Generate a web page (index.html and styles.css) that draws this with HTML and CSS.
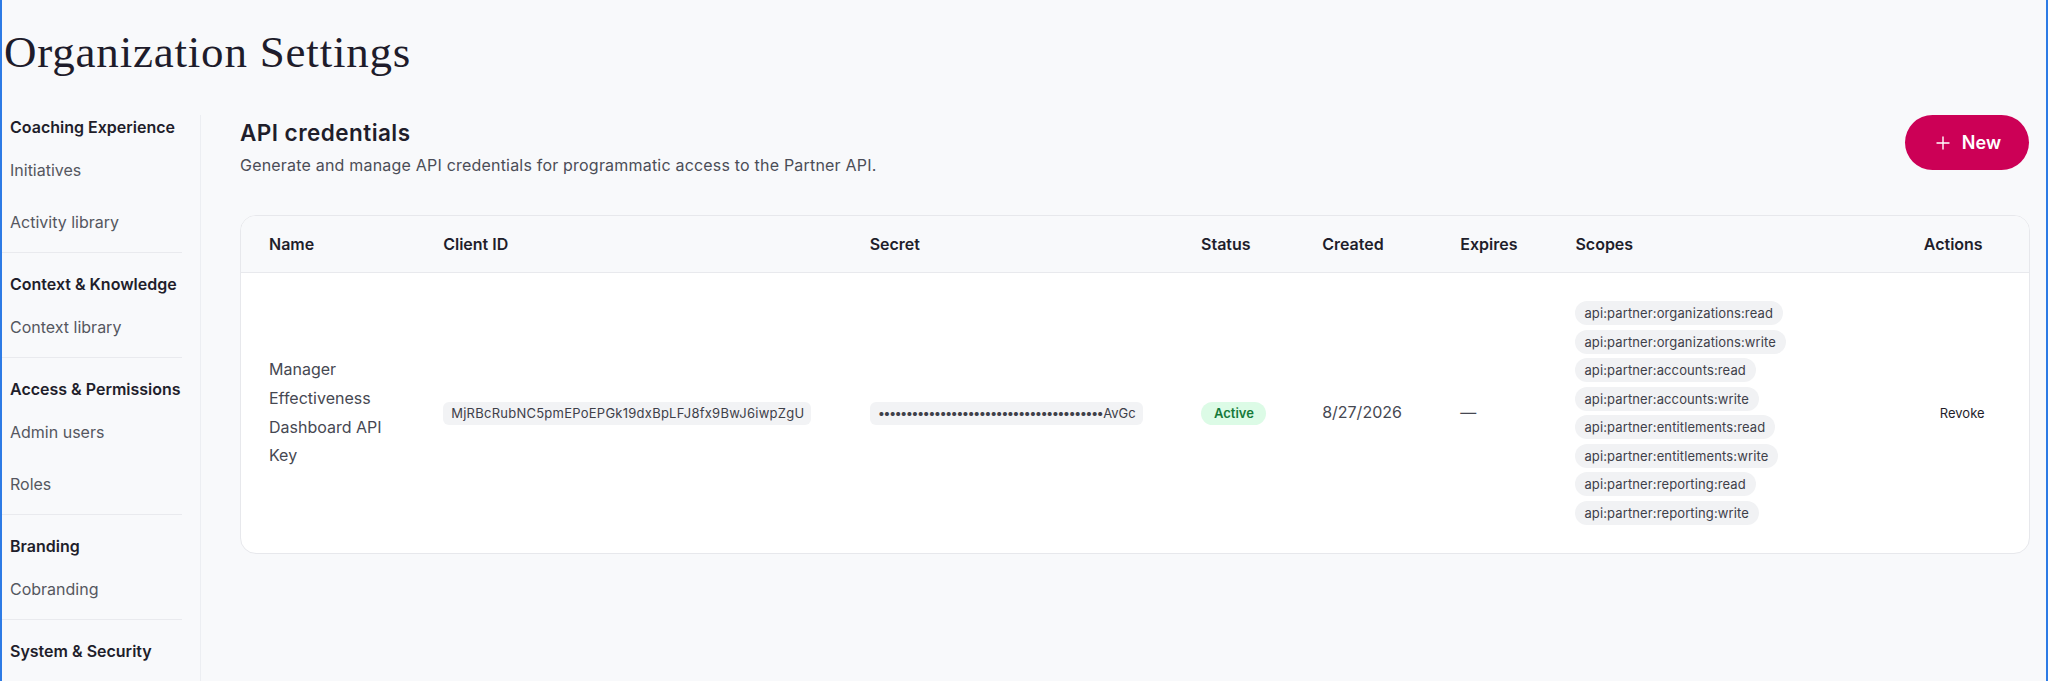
FILE: index.html
```html
<!DOCTYPE html>
<html lang="en">
<head>
<meta charset="utf-8">
<title>Organization Settings</title>
<link rel="stylesheet" href="styles.css">
</head>
<body>
<div class="frame">
  <h1 class="page-title">Organization Settings</h1>
  <div class="layout">
    <nav class="sidebar">
      <div class="nav-group">
        <div class="nav-heading">Coaching Experience</div>
        <a class="nav-item">Initiatives</a>
        <a class="nav-item">Activity library</a>
      </div>
      <div class="nav-group">
        <div class="nav-heading">Context &amp; Knowledge</div>
        <a class="nav-item">Context library</a>
      </div>
      <div class="nav-group">
        <div class="nav-heading">Access &amp; Permissions</div>
        <a class="nav-item">Admin users</a>
        <a class="nav-item">Roles</a>
      </div>
      <div class="nav-group">
        <div class="nav-heading">Branding</div>
        <a class="nav-item">Cobranding</a>
      </div>
      <div class="nav-group nav-group-last">
        <div class="nav-heading">System &amp; Security</div>
      </div>
    </nav>

    <main class="main">
      <header class="section-head">
        <div class="section-text">
          <h2 class="section-title">API credentials</h2>
          <p class="section-desc">Generate and manage API credentials for programmatic access to the Partner API.</p>
        </div>
        <button class="btn-new" type="button">
          <svg class="btn-icon" viewBox="0 0 14 14" width="14" height="14" aria-hidden="true">
            <path d="M7 1v12M1 7h12" stroke="currentColor" stroke-width="1.4" stroke-linecap="round" fill="none"/>
          </svg>
          <span>New</span>
        </button>
      </header>

      <div class="card">
        <table class="cred-table">
          <colgroup>
            <col class="c-name">
            <col class="c-client">
            <col class="c-secret">
            <col class="c-status">
            <col class="c-created">
            <col class="c-expires">
            <col class="c-scopes">
            <col class="c-actions">
          </colgroup>
          <thead>
            <tr>
              <th>Name</th>
              <th>Client ID</th>
              <th>Secret</th>
              <th>Status</th>
              <th>Created</th>
              <th>Expires</th>
              <th>Scopes</th>
              <th>Actions</th>
            </tr>
          </thead>
          <tbody>
            <tr>
              <td class="cell-name">Manager Effectiveness Dashboard API Key</td>
              <td><code class="chip-code chip-id">MjRBcRubNC5pmEPoEPGk19dxBpLFJ8fx9BwJ6iwpZgU</code></td>
              <td><code class="chip-code"><span class="mask">••••••••••••••••••••••••••••••••••••••••</span>AvGc</code></td>
              <td><span class="badge-active">Active</span></td>
              <td>8/27/2026</td>
              <td>—</td>
              <td>
                <div class="scope-list">
                  <span class="scope">api:partner:organizations:read</span>
                  <span class="scope">api:partner:organizations:write</span>
                  <span class="scope">api:partner:accounts:read</span>
                  <span class="scope">api:partner:accounts:write</span>
                  <span class="scope">api:partner:entitlements:read</span>
                  <span class="scope">api:partner:entitlements:write</span>
                  <span class="scope">api:partner:reporting:read</span>
                  <span class="scope">api:partner:reporting:write</span>
                </div>
              </td>
              <td><button class="btn-revoke" type="button">Revoke</button></td>
            </tr>
          </tbody>
        </table>
      </div>
    </main>
  </div>
</div>
</body>
</html>
```

FILE: styles.css
```css
* {
  box-sizing: border-box;
}

html,
body {
  margin: 0;
  padding: 0;
  height: 100%;
}

body {
  background: #f8f9fb;
  font-family: "Inter", "Liberation Sans", sans-serif;
  color: #1f2230;
}

.frame {
  min-height: 100%;
  border-left: 2px solid #2d7be5;
  border-right: 2px solid #2d7be5;
  display: flex;
  flex-direction: column;
}

/* Page title */
.page-title {
  margin: 0;
  padding: 25px 0 36px 2px;
  font-family: "Liberation Serif", "Times New Roman", serif;
  font-weight: 400;
  font-size: 45px;
  line-height: 54px;
  letter-spacing: 0.8px;
  color: #1e1c2b;
}

.layout {
  flex: 1;
  display: flex;
  align-items: stretch;
}

/* Sidebar navigation */
.sidebar {
  width: 199px;
  flex: none;
  padding: 0 18px 0 0;
  border-right: 1px solid #eceef2;
}

.nav-group {
  padding: 19px 0 4px;
  border-bottom: 1px solid #e9eaee;
}

.nav-group:first-child {
  padding-top: 0;
}

.nav-group-last {
  border-bottom: none;
}

.nav-heading {
  padding-left: 8px;
  font-size: 16px;
  font-weight: 600;
  line-height: 24px;
  color: #1f1e2b;
  margin-bottom: 5px;
}

.nav-item {
  display: flex;
  align-items: center;
  height: 52px;
  padding-left: 8px;
  font-size: 16px;
  color: #55575f;
  cursor: pointer;
}

/* Main column */
.main {
  flex: 1;
  min-width: 0;
  padding: 0 16px 0 39px;
}

.section-head {
  display: flex;
  justify-content: space-between;
  align-items: flex-start;
  margin-bottom: 38px;
}

.section-title {
  margin: 0;
  font-size: 22.5px;
  font-weight: 600;
  line-height: 36px;
  letter-spacing: 0.45px;
  color: #1f1e2b;
}

.section-desc {
  margin: 2px 0 0;
  font-size: 16px;
  line-height: 24px;
  letter-spacing: 0.2px;
  color: #4b4d57;
}

.btn-new {
  display: inline-flex;
  align-items: center;
  gap: 12px;
  height: 55px;
  padding: 0 28px 0 31px;
  border: none;
  border-radius: 28px;
  background: #cc0056;
  color: #ffffff;
  font-family: inherit;
  font-size: 18px;
  font-weight: 600;
  cursor: pointer;
  margin-right: 1px;
}

.btn-icon {
  display: block;
}

/* Credentials table */
.card {
  background: #ffffff;
  border: 1px solid #e7e8ec;
  border-radius: 16px;
  overflow: hidden;
}

.cred-table {
  width: 100%;
  border-collapse: collapse;
  table-layout: fixed;
}

.c-name { width: 174px; }
.c-client { width: 426px; }
.c-secret { width: 331px; }
.c-status { width: 121px; }
.c-created { width: 138px; }
.c-expires { width: 115px; }
.c-scopes { width: 348px; }
.c-actions { width: 133px; }

.cred-table th {
  background: #f8f9fb;
  text-align: left;
  padding: 16px 28px;
  font-size: 16px;
  line-height: 24px;
  font-weight: 600;
  color: #1f1e2b;
  border-bottom: 1px solid #e8e9ed;
}

.cred-table td {
  padding: 28px;
  vertical-align: middle;
  font-size: 16px;
  line-height: 28.7px;
  color: #464852;
}

.chip-code {
  display: inline-block;
  padding: 0 7px 0 8px;
  height: 23px;
  line-height: 23px;
  border-radius: 6px;
  background: #f2f3f5;
  font-family: "Inter", "Liberation Sans", sans-serif;
  font-size: 13px;
  color: #3e4049;
  white-space: nowrap;
}

.chip-id {
  letter-spacing: 0.25px;
}

/* masked secret: tight row of dots before the visible tail */
.mask {
  letter-spacing: -1.7px;
  margin-right: 1px;
}

.badge-active {
  display: inline-block;
  height: 23px;
  line-height: 23px;
  padding: 0 12px 0 13px;
  border-radius: 12px;
  background: #dcfbe6;
  color: #157a3a;
  font-size: 13px;
  font-weight: 600;
}

.scope-list {
  display: flex;
  flex-direction: column;
  align-items: flex-start;
  gap: 4.5px;
}

.scope {
  display: inline-block;
  height: 24px;
  line-height: 24px;
  padding: 0 10px 0 9px;
  border-radius: 12px;
  background: #f1f2f4;
  font-size: 13px;
  letter-spacing: 0.12px;
  color: #3e4049;
  white-space: nowrap;
}

.btn-revoke {
  border: none;
  background: transparent;
  padding: 4px 16px;
  font-family: inherit;
  font-size: 13px;
  color: #1f1e2b;
  cursor: pointer;
}
```
